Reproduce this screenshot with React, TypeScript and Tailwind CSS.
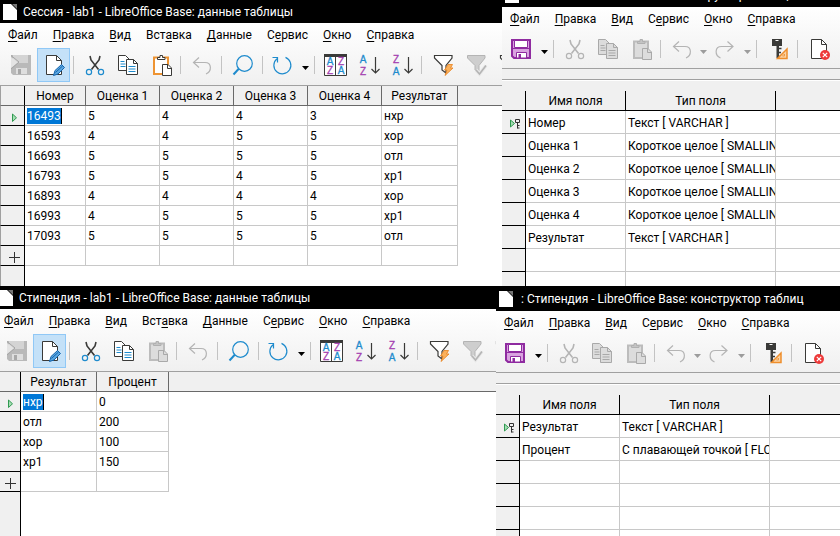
import React from "react";

const DARK = "#3a3a38";
const BLUE = "#1e8bcd";
const PURPLE = "#a43fb0";
const GREY = "#b4b4b4";

/* ---------- toolbar icons, drawn on the 33x34 button area ---------- */

function Svg({ children }: { children: React.ReactNode }) {
  return (
    <svg viewBox="0 0 33 34" className="block h-[34px] w-[33px]" fill="none" aria-hidden="true">
      {children}
    </svg>
  );
}

const SaveRecordIcon = () => (
  <Svg>
    <path d="M7 7h20v20H9l-2-2z" fill="#b9b9b9" />
    <path d="M9 7h15v8H9z" fill="#d4d4d4" />
    <path d="M7 9l7 5.500-7 5.500z" fill="#e4e4e4" />
    <path d="M7 7.500l8 6.500-8 7" stroke="#a6a6a6" strokeWidth="1" />
    <path d="M12 20h11v6H12z" fill="#dedede" />
    <path d="M14 21h3v5h-3z" fill="#a8a8a8" />
  </Svg>
);

const SaveIcon = () => (
  <Svg>
    <path d="M6 8h18v18H8l-2-2z" fill="#d9a3e0" stroke="#8f2ba0" strokeWidth="2" />
    <path d="M8.500 8.500h13v7h-13z" fill="#fff" stroke="#8f2ba0" />
    <path d="M6 16.500h18" stroke="#8f2ba0" />
    <path d="M10.500 20.500h10V26h-10z" fill="#fff" stroke="#8f2ba0" />
    <path d="M12.500 22h2.500v4h-2.500z" fill="#8f2ba0" />
  </Svg>
);

const EditIcon = () => (
  <Svg>
    <path d="M9.500 7.500H19.500L24.500 12.500V26.500H9.500z" fill="#fff" stroke={DARK} />
    <path d="M19.500 7.500v5h5" stroke={DARK} />
    <path d="M16.500 27.500l1.500-5 6.500-6 3 3-6.500 6.500z" fill="#5aa6e0" stroke="#1464ac" />
    <path d="M18.500 24.500l7-6.500" stroke="#1464ac" />
  </Svg>
);

const CutIcon = ({ off }: { off?: boolean }) => (
  <Svg>
    <path d="M12 8l1 4 7.500 9.500" stroke={off ? GREY : DARK} strokeWidth="1.600" />
    <path d="M22 8l-1 4-7.500 9.500" stroke={off ? GREY : DARK} strokeWidth="1.600" />
    <circle cx="11" cy="24" r="2.600" stroke={off ? GREY : BLUE} strokeWidth="1.200" />
    <circle cx="23" cy="24" r="2.600" stroke={off ? GREY : BLUE} strokeWidth="1.200" />
  </Svg>
);

const CopyIcon = ({ off }: { off?: boolean }) => {
  const line = off ? "#a9a9a9" : DARK;
  const fill = off ? "#dcdcdc" : "#fff";
  const ink = off ? "#a9a9a9" : BLUE;
  return (
    <Svg>
      <path d="M7.500 7.500H14.500L18.500 11.500V22.500H7.500z" fill={fill} stroke={line} />
      <path d="M9.500 16h5M9.500 18.500h5M9.500 13.500h4" stroke={ink} />
      <path d="M15.500 11.500H22.500L26.500 15.500V26.500H15.500z" fill={fill} stroke={line} />
      <path d="M22.500 11.500v4h4" stroke={line} />
      <path d="M17.500 18.500h7M17.500 21h7M17.500 23.500h7" stroke={ink} />
    </Svg>
  );
};

const PasteIcon = ({ off }: { off?: boolean }) => (
  <Svg>
    <path d="M10 9.500h14V26H10z" fill={off ? "#dcdcdc" : "#fff"} stroke={off ? "#bcbcbc" : "#ee9433"} strokeWidth="2" />
    <path d="M13.500 11.500v-2h2.500v-2h2.500v2H21v2z" fill={off ? "#c4c4c4" : "#fff"} stroke={off ? "#b0b0b0" : DARK} />
    <path d="M18.500 16.500H24L27.500 20V27.500H18.500z" fill={off ? "#dcdcdc" : "#fff"} stroke={off ? "#a9a9a9" : DARK} />
    <path d="M23.500 16.500V20.500H27.500" stroke={off ? "#a9a9a9" : DARK} />
  </Svg>
);

const UndoIcon = () => (
  <Svg>
    <path d="M14 9.500L8.500 14.500L14 19.500M8.500 14.500H20c7 0 7 9 1 11.500" stroke={GREY} strokeWidth="1.200" />
  </Svg>
);

const RedoIcon = () => (
  <Svg>
    <path d="M18.500 9.500L24 14.500L18.500 19.500M24 14.500H12.500c-7 0-7 9-1 11.500" stroke={GREY} strokeWidth="1.200" />
  </Svg>
);

const FindIcon = () => (
  <Svg>
    <circle cx="18.500" cy="15.500" r="7.800" stroke={BLUE} strokeWidth="1.200" />
    <path d="M13 20.500L7.500 26.500" stroke={BLUE} strokeWidth="2" />
  </Svg>
);

const RefreshIcon = () => (
  <Svg>
    <path d="M18.500 9.400A8.500 8.500 0 1 1 10 10.700" stroke={BLUE} strokeWidth="1.200" />
    <path d="M5.500 9.500h5v5" stroke={BLUE} strokeWidth="1.200" />
  </Svg>
);

function Letter({ x, y, c }: { x: number; y: number; c: "A" | "Z" }) {
  return (
    <text x={x} y={y} textAnchor="middle" fontSize="10" fontFamily="Liberation Sans, sans-serif" fill={c === "A" ? BLUE : PURPLE} stroke={c === "A" ? BLUE : PURPLE} strokeWidth="0.300">
      {c}
    </text>
  );
}

const SortIcon = () => (
  <Svg>
    <path d="M5.500 7.500h22v20h-22z" fill="#fff" stroke={DARK} />
    <path d="M5 7.500h23" stroke={DARK} strokeWidth="3" />
    <path d="M16.500 9v18" stroke={DARK} />
    <Letter x={11} y={17} c="A" />
    <Letter x={11} y={26} c="Z" />
    <Letter x={22} y={17} c="Z" />
    <Letter x={22} y={26} c="A" />
  </Svg>
);

const SortAscIcon = () => (
  <Svg>
    <Letter x={11} y={15} c="A" />
    <Letter x={11} y={27} c="Z" />
    <path d="M23.500 9v16M19.500 21l4 4 4-4" stroke={DARK} strokeWidth="1.200" />
  </Svg>
);

const SortDescIcon = () => (
  <Svg>
    <Letter x={11} y={15} c="Z" />
    <Letter x={11} y={27} c="A" />
    <path d="M23.500 9v16M19.500 21l4 4 4-4" stroke={DARK} strokeWidth="1.200" />
  </Svg>
);

const AutoFilterIcon = () => (
  <Svg>
    <path d="M8.500 7.500h17.500v2.500l-6 7.500V25l-4-3v-4.500l-7.500-7.500z" fill="#fff" stroke={DARK} strokeWidth="1.200" />
    <path d="M22 16.500h4.500L24.500 20H27l-8 7.500 2-5.500h-2.500z" fill="#fbb15c" stroke="#e8801a" strokeWidth="0.800" />
  </Svg>
);

const ApplyFilterIcon = () => (
  <Svg>
    <path d="M8.500 7.500h17.500v2.500l-6 7.500V25l-4-3v-4.500l-7.500-7.500z" fill="#cecece" stroke={GREY} />
    <path d="M17 22l3.500 4L27 17.500" stroke="#e8e8e8" strokeWidth="3.500" />
    <path d="M17 22l3.500 4L27 17.500" stroke={GREY} strokeWidth="1.600" />
  </Svg>
);

const StandardFilterIcon = () => (
  <Svg>
    <path d="M8.500 7.500h17.500v2.500l-6 7.500V25l-4-3v-4.500l-7.500-7.500z" fill="#fff" stroke={DARK} strokeWidth="1.200" />
  </Svg>
);

const IndexIcon = () => (
  <Svg>
    <path d="M11 7h10v7h-3v12h-2.500V14H11z" fill={DARK} />
    <path d="M18 16.500h2.500M18 20.500h2M18 24.500h2" stroke={DARK} strokeWidth="1.500" />
    <path d="M14.500 8.500h3" stroke="#fff" strokeWidth="1" />
    <path d="M26 17v9.500H16.500z" fill="#fbd3a4" stroke="#ee8e2c" strokeWidth="1.500" />
    <path d="M23.500 22v2h-2z" fill="#fff" stroke="#ee8e2c" strokeWidth="0.800" />
  </Svg>
);

const CloseDocIcon = () => (
  <Svg>
    <path d="M9.500 7.500H19.500L24.500 12.500V26.500H9.500z" fill="#fff" stroke={DARK} />
    <path d="M19.500 7.500v5h5" stroke={DARK} />
    <circle cx="23" cy="23" r="5" fill="#ee3a3a" />
    <path d="M20.800 20.800l4.400 4.400M25.200 20.800l-4.400 4.400" stroke="#fff" strokeWidth="1.200" />
  </Svg>
);

/* ---------- window parts ---------- */

function Tool({ label, active, children }: { label: string; active?: boolean; children: React.ReactNode }) {
  return (
    <button
      type="button"
      aria-label={label}
      className={
        active
          ? "h-[34px] w-[33px] shrink-0 bg-[#c4e1f8] outline outline-1 -outline-offset-1 outline-[#90c8f6]"
          : "h-[34px] w-[33px] shrink-0"
      }
    >
      {children}
    </button>
  );
}

function Drop({ label, off }: { label: string; off?: boolean }) {
  return (
    <button type="button" aria-label={label} className="h-[34px] w-[11px] shrink-0">
      <svg viewBox="0 0 11 34" className="block h-[34px] w-[11px]" aria-hidden="true">
        <path d="M2 18h7l-3.500 4z" fill={off ? "#9c9c9c" : "#000"} />
      </svg>
    </button>
  );
}

const Sep = () => <span className="mt-2 mr-1 ml-[3px] h-[18px] w-px shrink-0 bg-[#c3c3c3]" />;

function TitleBar({ title, tall }: { title: string; tall?: boolean }) {
  return (
    <header
      className={
        tall
          ? "flex h-[25px] shrink-0 items-center gap-2 bg-black pl-[3px] text-white"
          : "flex h-[23px] shrink-0 items-center gap-1.5 bg-black pl-[3px] text-white"
      }
    >
      <svg viewBox="0 0 14 16" className="h-4 w-3.5 shrink-0" aria-hidden="true">
        <path d="M0 0h8l6 6v10H0z" fill="#fff" />
        <path d="M9 0h5v5z" fill="#777" />
      </svg>
      <h2 className="whitespace-nowrap">{title}</h2>
    </header>
  );
}

/* Menu titles carry "_" before their access key. */
const tableMenu = ["_Файл", "_Правка", "_Вид", "Вст_авка", "_Данные", "С_ервис", "_Окно", "_Справка"];
const designMenu = ["_Файл", "_Правка", "_Вид", "С_ервис", "_Окно", "_Справка"];

function Menu({ items }: { items: string[] }) {
  return (
    <nav className="flex h-6 shrink-0 items-center gap-[15px] pl-2">
      {items.map((item) => {
        const [before, after] = item.split("_");
        return (
          <button key={item} type="button" className="whitespace-nowrap">
            {before}
            <span className="underline underline-offset-2">{after[0]}</span>
            {after.slice(1)}
          </button>
        );
      })}
    </nav>
  );
}

const RowArrow = () => (
  <svg viewBox="0 0 23 19" className="block h-[19px] w-[23px]" aria-hidden="true">
    <path d="M11.500 8v7.500l4-3.700z" fill="#a6dcb4" stroke="#2f9a50" />
  </svg>
);

const NewRow = () => (
  <svg viewBox="0 0 23 19" className="block h-[19px] w-[23px]" aria-hidden="true">
    <path d="M8 11.500h11M13.500 6v11" stroke="#333" />
  </svg>
);

type Col = { name: string; width: string };

function DataWindow({ title, pasteOff, cols, rows }: { title: string; pasteOff?: boolean; cols: Col[]; rows: string[][] }) {
  return (
    <>
      <TitleBar title={title} />
      <div className="shrink-0 border-b border-[#a0a0a0] bg-linear-to-b from-white to-[#f0f0f0]">
        <Menu items={tableMenu} />
        <div className="flex h-[38px] pt-px pl-1">
          <Tool label="Сохранить запись"><SaveRecordIcon /></Tool>
          <Tool label="Правка данных" active><EditIcon /></Tool>
          <Sep />
          <Tool label="Вырезать"><CutIcon /></Tool>
          <Tool label="Копировать"><CopyIcon /></Tool>
          <Tool label="Вставить"><PasteIcon off={pasteOff} /></Tool>
          <Sep />
          <Tool label="Отменить"><UndoIcon /></Tool>
          <Sep />
          <Tool label="Найти"><FindIcon /></Tool>
          <Sep />
          <Tool label="Обновить"><RefreshIcon /></Tool>
          <Drop label="Параметры обновления" />
          <Sep />
          <Tool label="Сортировка"><SortIcon /></Tool>
          <Tool label="По возрастанию"><SortAscIcon /></Tool>
          <Tool label="По убыванию"><SortDescIcon /></Tool>
          <Sep />
          <Tool label="Автофильтр"><AutoFilterIcon /></Tool>
          <Tool label="Применить фильтр"><ApplyFilterIcon /></Tool>
          <Tool label="Стандартный фильтр"><StandardFilterIcon /></Tool>
        </div>
      </div>
      <table className="w-full table-fixed border-separate border-spacing-0">
        <colgroup>
          <col className="w-[25px]" />
          {cols.map((c) => (
            <col key={c.name} className={c.width} />
          ))}
          <col />
        </colgroup>
        <thead>
          <tr className="h-5 bg-[#f0f0f0]">
            <td className="border-r border-b border-l border-r-black border-b-[#696969] border-l-[#a0a0a0] p-0" />
            {cols.map((c) => (
              <th key={c.name} scope="col" className="border-r border-b border-[#696969] p-0 text-center font-normal whitespace-nowrap">
                {c.name}
              </th>
            ))}
            <td className="border-b border-[#696969] p-0" />
          </tr>
        </thead>
        <tbody>
          {[...rows, cols.map(() => "")].map((row, r) => (
            <tr key={r} className="h-5">
              <td className="border-r border-b border-l border-black border-l-[#a0a0a0] bg-[#f0f0f0] p-0">
                {r === 0 && <RowArrow />}
                {r === rows.length && <NewRow />}
              </td>
              {row.map((cell, c) => (
                <td key={c} className="border-r border-b border-[#c8c8c8] p-0 pl-0.5 whitespace-nowrap">
                  {r === 0 && c === 0 ? (
                    <span className="inline-block border-r border-black bg-[#0078d7] align-top text-white">{cell}</span>
                  ) : (
                    cell
                  )}
                </td>
              ))}
              <td />
            </tr>
          ))}
        </tbody>
      </table>
      <div className="w-[25px] grow border-r border-l border-r-black border-l-[#a0a0a0] bg-[#f0f0f0]" />
    </>
  );
}

function DesignWindow({ title, fields }: { title: string; fields: [string, string][] }) {
  const rows: [string, string][] = [...fields, ["", ""], ["", ""], ["", ""], ["", ""]];
  return (
    <>
      <TitleBar title={title} tall />
      <div className="shrink-0 border-b border-[#a0a0a0] bg-linear-to-b from-white to-[#f0f0f0]">
        <Menu items={designMenu} />
        <div className="flex h-[37px] pt-px pl-1">
          <Tool label="Сохранить"><SaveIcon /></Tool>
          <Drop label="Параметры сохранения" />
          <Sep />
          <Tool label="Вырезать"><CutIcon off /></Tool>
          <Tool label="Копировать"><CopyIcon off /></Tool>
          <Tool label="Вставить"><PasteIcon off /></Tool>
          <Sep />
          <Tool label="Отменить"><UndoIcon /></Tool>
          <Drop label="Список отмены" off />
          <Tool label="Вернуть"><RedoIcon /></Tool>
          <Drop label="Список возврата" off />
          <Sep />
          <Tool label="Индексы"><IndexIcon /></Tool>
          <Sep />
          <Tool label="Закрыть"><CloseDocIcon /></Tool>
        </div>
      </div>
      <div className="h-[11px] shrink-0 border-b border-[#a0a0a0] bg-[#f0f0f0]" />
      <div className="h-[11px] shrink-0 border-t border-white bg-[#f0f0f0]" />
      <table className="w-full table-fixed border-separate border-spacing-0">
        <colgroup>
          <col className="w-6" />
          <col className="w-[100px]" />
          <col className="w-[150px]" />
          <col />
        </colgroup>
        <thead>
          <tr className="h-5 bg-[#f0f0f0]">
            <td className="border-r border-b border-black p-0" />
            <th scope="col" className="border-r border-b border-black p-0 text-center font-normal">Имя поля</th>
            <th scope="col" className="border-r border-b border-black p-0 text-center font-normal">Тип поля</th>
            <td className="border-b border-black p-0" />
          </tr>
        </thead>
        <tbody>
          {rows.map(([name, type], r) => (
            <tr key={r} className="h-[23px]">
              <td className="border-r border-b border-black bg-[#f0f0f0] p-0">
                {r === 0 && (
                  <svg viewBox="0 0 23 22" className="block h-[22px] w-[23px]" fill="none" aria-hidden="true">
                    <path d="M8.500 9v7l4-3.500z" fill="#a6dcb4" stroke="#2f9a50" />
                    <path d="M13.500 8.500h4v3h-4zM15.500 11.500v6M15.500 14.500h2M15.500 17h2" stroke="#333" />
                  </svg>
                )}
              </td>
              <td className="overflow-hidden border-r border-b border-[#c8c8c8] p-0 pt-0.5 pl-0.5 whitespace-nowrap">{name}</td>
              <td className="overflow-hidden border-r border-b border-[#c8c8c8] p-0 pt-0.5 pl-0.5 whitespace-nowrap">{type}</td>
              <td className="border-b border-[#c8c8c8] p-0" />
            </tr>
          ))}
        </tbody>
      </table>
    </>
  );
}

const marks: Col[] = [
  { name: "Номер", width: "w-[61px]" },
  { name: "Оценка 1", width: "w-[74px]" },
  { name: "Оценка 2", width: "w-[74px]" },
  { name: "Оценка 3", width: "w-[74px]" },
  { name: "Оценка 4", width: "w-[74px]" },
  { name: "Результат", width: "w-[76px]" },
];

const markRows = [
  ["16493", "5", "4", "4", "3", "нхр"],
  ["16593", "4", "4", "5", "5", "хор"],
  ["16693", "5", "5", "5", "5", "отл"],
  ["16793", "5", "5", "4", "5", "хр1"],
  ["16893", "4", "4", "4", "4", "хор"],
  ["16993", "4", "5", "5", "5", "хр1"],
  ["17093", "5", "5", "5", "5", "отл"],
];

const grants: Col[] = [
  { name: "Результат", width: "w-[76px]" },
  { name: "Процент", width: "w-[72px]" },
];

const grantRows = [
  ["нхр", "0"],
  ["отл", "200"],
  ["хор", "100"],
  ["хр1", "150"],
];

export default function App() {
  return (
    <main className="grid h-screen grid-rows-[286fr_250fr] overflow-hidden bg-white font-['Roboto','Noto_Sans',sans-serif] text-[12px] leading-4 text-black">
      <div className="grid min-h-0 grid-cols-[502fr_338fr]">
        <section className="flex min-w-0 flex-col overflow-hidden">
          <DataWindow title="Сессия - lab1 - LibreOffice Base: данные таблицы" cols={marks} rows={markRows} />
        </section>
        <section className="min-w-0 overflow-hidden">
          <div className="-mt-[18px] flex flex-col">
            <DesignWindow
              title=": Сессия - LibreOffice Base: конструктор таблиц"
              fields={[
                ["Номер", "Текст [ VARCHAR ]"],
                ["Оценка 1", "Короткое целое [ SMALLIN"],
                ["Оценка 2", "Короткое целое [ SMALLIN"],
                ["Оценка 3", "Короткое целое [ SMALLIN"],
                ["Оценка 4", "Короткое целое [ SMALLIN"],
                ["Результат", "Текст [ VARCHAR ]"],
              ]}
            />
          </div>
        </section>
      </div>
      <div className="grid min-h-0 grid-cols-[496fr_344fr]">
        <section className="flex min-w-0 flex-col overflow-hidden">
          <div className="-ml-1 flex grow flex-col">
            <DataWindow title="Стипендия - lab1 - LibreOffice Base: данные таблицы" pasteOff cols={grants} rows={grantRows} />
          </div>
        </section>
        <section className="flex min-w-0 flex-col overflow-hidden">
          <DesignWindow
            title=": Стипендия - LibreOffice Base: конструктор таблиц"
            fields={[
              ["Результат", "Текст [ VARCHAR ]"],
              ["Процент", "С плавающей точкой [ FLO"],
            ]}
          />
        </section>
      </div>
    </main>
  );
}
